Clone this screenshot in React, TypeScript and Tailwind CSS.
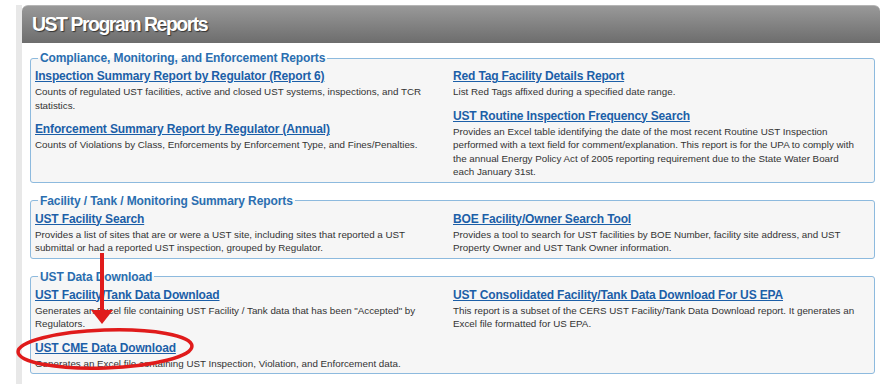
import React from 'react';

type Report = { title: string; desc: string };

const sections: { legend: string; left: Report[]; right: Report[] }[] = [
  {
    legend: 'Compliance, Monitoring, and Enforcement Reports',
    left: [
      {
        title: 'Inspection Summary Report by Regulator (Report 6)',
        desc: 'Counts of regulated UST facilities, active and closed UST systems, inspections, and TCR statistics.',
      },
      {
        title: 'Enforcement Summary Report by Regulator (Annual)',
        desc: 'Counts of Violations by Class, Enforcements by Enforcement Type, and Fines/Penalties.',
      },
    ],
    right: [
      { title: 'Red Tag Facility Details Report', desc: 'List Red Tags affixed during a specified date range.' },
      {
        title: 'UST Routine Inspection Frequency Search',
        desc: 'Provides an Excel table identifying the date of the most recent Routine UST Inspection performed with a text field for comment/explanation. This report is for the UPA to comply with the annual Energy Policy Act of 2005 reporting requirement due to the State Water Board each January 31st.',
      },
    ],
  },
  {
    legend: 'Facility / Tank / Monitoring Summary Reports',
    left: [
      {
        title: 'UST Facility Search',
        desc: 'Provides a list of sites that are or were a UST site, including sites that reported a UST submittal or had a reported UST inspection, grouped by Regulator.',
      },
    ],
    right: [
      {
        title: 'BOE Facility/Owner Search Tool',
        desc: 'Provides a tool to search for UST facilities by BOE Number, facility site address, and UST Property Owner and UST Tank Owner information.',
      },
    ],
  },
  {
    legend: 'UST Data Download',
    left: [
      {
        title: 'UST Facility/Tank Data Download',
        desc: 'Generates an Excel file containing UST Facility / Tank data that has been "Accepted" by Regulators.',
      },
      {
        title: 'UST CME Data Download',
        desc: 'Generates an Excel file containing UST Inspection, Violation, and Enforcement data.',
      },
    ],
    right: [
      {
        title: 'UST Consolidated Facility/Tank Data Download For US EPA',
        desc: 'This report is a subset of the CERS UST Facility/Tank Data Download report. It generates an Excel file formatted for US EPA.',
      },
    ],
  },
];

function ReportItem({ r }: { r: Report }) {
  return (
    <div className="mb-[9px] last:mb-0 pr-[8px]">
      <a href="#" className="block text-[12px] leading-[17px] font-bold text-[#1c5fa8] underline tracking-[-0.15px]">
        {r.title}
      </a>
      <p className="text-[9.8px] leading-[13.5px] text-[#333]">{r.desc}</p>
    </div>
  );
}

export default function App() {
  return (
    <div className="relative w-[891px] h-[384px] bg-white overflow-hidden font-['Liberation_Sans',Arial,sans-serif]">
      <div className="ml-[16px] mt-[5px] flex h-[379px]">
        <div className="w-[6px] bg-[#e8e8e8]" />
        <div className="w-[858px]">
          {/* Header */}
          <div className="h-[38px] rounded-t-[6px] bg-gradient-to-b from-[#999999] to-[#6d6d6d] border-t border-[#b5b5b5] flex items-center pl-[10px]">
            <h1 className="text-white font-bold text-[19.5px] tracking-[-1.5px] [text-shadow:1px_1px_1px_#333]">
              UST Program Reports
            </h1>
          </div>

          {/* Content */}
          <div className="pl-[8px] pr-[5px] pt-[7px] space-y-[10px]">
            {sections.map((s) => (
              <fieldset
                key={s.legend}
                className="border border-[#8dbade] rounded-[3px] bg-[#f6f6f6] px-[4px] pt-[2px] pb-[3px]"
              >
                <legend className="ml-[3px] px-[2px] text-[12px] leading-[16px] font-bold text-[#2a6eb0] tracking-[-0.1px]">
                  {s.legend}
                </legend>
                <div className="grid grid-cols-[418px_1fr]">
                  <div>
                    {s.left.map((r) => (
                      <ReportItem key={r.title} r={r} />
                    ))}
                  </div>
                  <div>
                    {s.right.map((r) => (
                      <ReportItem key={r.title} r={r} />
                    ))}
                  </div>
                </div>
              </fieldset>
            ))}
          </div>
        </div>
      </div>

      {/* Annotation */}
      <svg className="absolute inset-0 pointer-events-none" width="891" height="384" viewBox="0 0 891 384">
        <line x1="102" y1="253" x2="102" y2="313" stroke="#e01b1b" strokeWidth="4" />
        <polygon points="91,310 113,310 102,324" fill="#e01b1b" />
        <ellipse
          cx="105"
          cy="349"
          rx="87"
          ry="19"
          fill="none"
          stroke="#e01b1b"
          strokeWidth="3.5"
          transform="rotate(-2 105 349)"
        />
      </svg>
    </div>
  );
}
